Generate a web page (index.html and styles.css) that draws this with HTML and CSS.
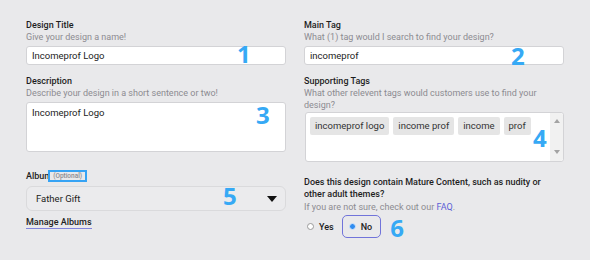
FILE: index.html
```html
<!DOCTYPE html>
<html>
<head>
<meta charset="utf-8">
<link rel="stylesheet" href="styles.css">
</head>
<body>
<div class="page">
  <div class="col">
    <div class="field">
      <div class="label">Design Title</div>
      <div class="hint">Give your design a name!</div>
      <div class="wrap">
        <div class="input">Incomeprof Logo</div>
        <span class="num n1">1</span>
      </div>
    </div>
    <div class="field">
      <div class="label">Description</div>
      <div class="hint">Describe your design in a short sentence or two!</div>
      <div class="wrap">
        <div class="input area">Incomeprof Logo</div>
        <span class="num n3">3</span>
      </div>
    </div>
    <div class="field album">
      <div class="label">Album<span class="opt">(Optional)</span></div>
      <div class="wrap">
        <div class="select">
          <span>Father Gift</span>
          <svg class="caret" width="10" height="6" viewBox="0 0 10 6"><path d="M0 0H10L5 6Z" fill="#111"/></svg>
        </div>
        <span class="num n5">5</span>
      </div>
      <a class="manage">Manage Albums</a>
    </div>
  </div>
  <div class="col">
    <div class="field">
      <div class="label">Main Tag</div>
      <div class="hint">What (1) tag would I search to find your design?</div>
      <div class="wrap">
        <div class="input">incomeprof</div>
        <span class="num n2">2</span>
      </div>
    </div>
    <div class="field">
      <div class="label">Supporting Tags</div>
      <div class="hint two">What other relevent tags would customers use to find your design?</div>
      <div class="wrap">
        <div class="tagbox">
          <div class="tags">
            <span class="tag">incomeprof logo</span>
            <span class="tag">income prof</span>
            <span class="tag">income</span>
            <span class="tag">prof</span>
          </div>
          <div class="scroll">
            <svg width="6" height="4" viewBox="0 0 6 4"><path d="M0 4H6L3 0Z" fill="#a3a3a3"/></svg>
            <svg width="6" height="4" viewBox="0 0 6 4"><path d="M0 0H6L3 4Z" fill="#a3a3a3"/></svg>
          </div>
        </div>
        <span class="num n4">4</span>
      </div>
    </div>
    <div class="field mature">
      <div class="question">Does this design contain Mature Content, such as nudity or other adult themes?</div>
      <div class="hint">If you are not sure, check out our <a class="faq">FAQ</a>.</div>
      <div class="radios">
        <label class="radio"><span class="dot"></span>Yes</label>
        <label class="radio selected"><span class="dot on"></span>No</label>
        <span class="num n6">6</span>
      </div>
    </div>
  </div>
</div>
</body>
</html>
```
FILE: styles.css
```css
body {
  margin: 0;
  background: #e9e9eb;
  font-family: Roboto, "Liberation Sans", Arial, sans-serif;
  color: #222;
}
.page {
  display: grid;
  grid-template-columns: 260px 260px;
  column-gap: 18px;
  padding: 19px 26px 0;
}
.col {
  display: flex;
  flex-direction: column;
}
.field {
  display: flex;
  flex-direction: column;
  margin-bottom: 10px;
}
.label {
  font-size: 9px;
  font-weight: 500;
  line-height: 12px;
  color: #1e1e1e;
}
.hint {
  font-size: 9px;
  line-height: 12px;
  color: #8c8b91;
  margin-top: 0;
  margin-bottom: 3px;
}
.hint.two {
  margin-bottom: 1px;
}
.wrap {
  position: relative;
}
.input {
  box-sizing: border-box;
  height: 19px;
  background: #fff;
  border: 1px solid #d3d3d6;
  border-radius: 3px;
  font-size: 9.5px;
  line-height: 17px;
  padding: 0 5px;
  color: #222;
}
.input.area {
  height: 50px;
  line-height: 14px;
  padding-top: 3px;
}
.num {
  position: absolute;
  font-family: "Open Sans", sans-serif;
  font-weight: 700;
  font-size: 24px;
  line-height: 24px;
  color: #36a9f5;
}
.n1 { left: 211px; top: -4px; }
.n2 { left: 207px; top: -2px; }
.n3 { left: 230px; top: 1px; }
.n4 { left: 229px; top: 14px; }
.n5 { left: 197px; top: -2px; }
.album {
  margin-top: 8px;
}
.album .label {
  margin-bottom: 4px;
  display: flex;
  align-items: center;
}
.opt {
  box-sizing: border-box;
  height: 12px;
  margin-left: -4px;
  padding: 0 3px;
  border: 2px solid #36a3f4;
  background: #e9e9eb;
  font-size: 6.5px;
  line-height: 8px;
  font-weight: 500;
  color: #8c8b91;
}
.select {
  box-sizing: border-box;
  height: 25px;
  border: 1px solid #dadadc;
  border-radius: 6px;
  background: #ebebed;
  display: flex;
  align-items: center;
  justify-content: space-between;
  padding: 0 8px 0 9px;
  font-size: 9.5px;
  color: #222;
}
.manage {
  align-self: flex-start;
  margin-top: 6px;
  font-size: 9px;
  font-weight: 500;
  line-height: 11px;
  color: #222;
  border-bottom: 1px solid #8184de;
}
.tagbox {
  box-sizing: border-box;
  height: 50px;
  width: 259px;
  margin-left: 1px;
  background: #fff;
  border: 1px solid #d3d3d6;
  border-radius: 3px;
  display: flex;
}
.tags {
  flex: 1;
  display: flex;
  align-items: flex-start;
  gap: 4px;
  padding: 4px;
}
.tag {
  background: #e5e5e5;
  border-radius: 2px;
  height: 18px;
  line-height: 18px;
  padding: 0 5px;
  font-size: 9.5px;
  color: #333;
}
.scroll {
  width: 13px;
  background: #f1f1f1;
  display: flex;
  flex-direction: column;
  justify-content: space-between;
  align-items: center;
  padding: 6px 0 7px;
  border-radius: 0 3px 3px 0;
}
.mature {
  margin-top: 4px;
}
.question {
  font-size: 9px;
  font-weight: 500;
  line-height: 12px;
  color: #1e1e1e;
  margin-bottom: 1px;
}
.mature .hint {
  margin-bottom: 2px;
}
.faq {
  color: #5b5fd6;
}
.radios {
  position: relative;
  display: flex;
  align-items: center;
  height: 23px;
  gap: 6px;
}
.radio {
  display: flex;
  align-items: center;
  gap: 5px;
  font-size: 9px;
  font-weight: 500;
  color: #222;
  padding-left: 3px;
}
.radio.selected {
  box-sizing: border-box;
  height: 23px;
  padding: 0 8px 0 6px;
  border: 1.5px solid #7174da;
  border-radius: 5px;
  margin-left: 2px;
}
.dot {
  box-sizing: border-box;
  width: 7px;
  height: 7px;
  border-radius: 50%;
  border: 1px solid #9a9a9a;
  background: #fff;
}
.dot.on {
  border: 1.5px solid #d6e6fb;
  background: #2f8cf0;
}
.n6 {
  position: static;
  margin-left: 3px;
  margin-top: 3px;
}
```
